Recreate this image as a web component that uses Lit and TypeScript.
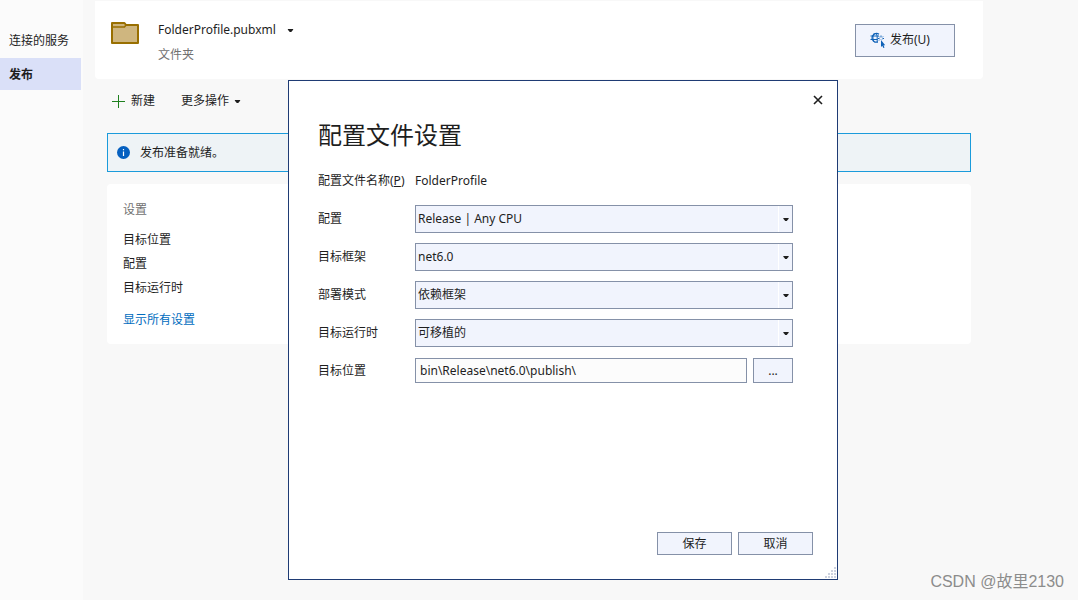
import { LitElement, html, css, svg } from "lit";
import { customElement, property, state } from "lit/decorators.js";

const caret = (cls: string) => html`<svg class=${cls} width="7" height="4" viewBox="0 0 7 4" aria-hidden="true">
  <path d="M0 0h7v1L4.500 4h-2L0 1z" fill="#1e1e1e" />
</svg>`;

@customElement("option-select")
class OptionSelect extends LitElement {
  @property() label = "";
  @property({ type: Array }) options: string[] = [];

  static styles = css`
    :host { display: contents; }
    .label { align-self: center; }
    .box { display: grid; grid-template-columns: 1fr 14px; height: 28px; box-sizing: border-box; border: 1px solid #8591a8; background: #f1f4fd; }
    .control { grid-area: 1 / 1 / 2 / 3; appearance: none; border: 0; margin: 0; padding: 0 16px 0 2px; background: none; font: inherit; line-height: 24px; color: inherit; min-width: 0; border-radius: 0; outline-offset: -2px; }
    .arrow { grid-area: 1 / 2; border-left: 1px solid #fff; display: flex; align-items: center; justify-content: center; pointer-events: none; }
    .caret { width: 6px; height: 3px; }
  `;

  render() {
    return html`
      <label class="label" for="control">${this.label}</label>
      <div class="box">
        <select class="control" id="control">
          ${this.options.map((o) => html`<option>${o}</option>`)}
        </select>
        <span class="arrow">${caret("caret")}</span>
      </div>
    `;
  }
}

@customElement("profile-dialog")
class ProfileDialog extends LitElement {
  @state() location = "bin\\Release\\net6.0\\publish\\";

  static styles = css`
    :host { display: flex; flex-direction: column; box-sizing: border-box; border: 1px solid #1f3b74; background: #fff; }
    .close { align-self: flex-end; display: flex; align-items: center; justify-content: center; width: 24px; height: 24px; margin: 7px 7px 0 0; padding: 0; border: 0; background: none; }
    .title { margin: 7px 29px 16px; font-size: 24px; line-height: 32px; font-weight: 400; }
    .form { display: grid; grid-template-columns: 87px 1fr; grid-auto-rows: 28px; gap: 10px; margin: 0 44px 0 29px; align-items: center; }
    .label { white-space: nowrap; }
    .path { display: flex; gap: 6px; height: 26px; }
    .input { flex: 1; min-width: 0; height: 25px; box-sizing: border-box; border: 1px solid #8591a8; padding: 0 4px; background: #fcfcfc; font: inherit; color: inherit; border-radius: 0; }
    .button { height: 23px; width: 75px; padding: 0; border: 1px solid #8591a8; background: #f1f4fd; font: inherit; color: inherit; border-radius: 0; }
    .browse { width: 40px; height: 25px; }
    .footer { display: flex; justify-content: flex-end; gap: 6px; margin-top: auto; padding: 0 24px 24px; }
    .grip { position: absolute; right: 1px; bottom: 1px; }
  `;

  render() {
    const dots = [];
    for (let r = 0; r < 4; r++)
      for (let c = 3 - r; c < 4; c++)
        dots.push(svg`<rect x=${c * 3} y=${r * 3} width="2" height="2" fill="#cdd2df" />`);
    return html`
      <button class="close" aria-label="关闭">
        <svg width="10" height="10" viewBox="0 0 10 10"><path d="M1 1l8 8M9 1l-8 8" stroke="#1e1e1e" stroke-width="1.6" /></svg>
      </button>
      <h1 class="title">配置文件设置</h1>
      <div class="form">
        <label class="label" for="name">配置文件名称(<u>P</u>)</label>
        <output id="name">FolderProfile</output>
        <option-select label="配置" .options=${["Release | Any CPU"]}></option-select>
        <option-select label="目标框架" .options=${["net6.0"]}></option-select>
        <option-select label="部署模式" .options=${["依赖框架"]}></option-select>
        <option-select label="目标运行时" .options=${["可移植的"]}></option-select>
        <label class="label" for="location">目标位置</label>
        <div class="path">
          <input class="input" id="location" .value=${this.location} />
          <button class="button browse">...</button>
        </div>
      </div>
      <div class="footer">
        <button class="button">保存</button>
        <button class="button">取消</button>
      </div>
      <svg class="grip" width="11" height="11" aria-hidden="true">${dots}</svg>
    `;
  }
}

@customElement("app-root")
class AppRoot extends LitElement {
  static styles = css`
    :host { display: grid; grid-template-columns: 83px 1fr; position: relative; min-height: 100vh; background: #f8f8f8; color: #1e1e1e; font: 12px/16px "Noto Sans", "Noto Sans CJK SC", sans-serif; }
    .nav { background: #fbfbfb; padding-top: 24px; }
    .nav-item { display: flex; align-items: center; height: 32px; box-sizing: border-box; margin: 0 2px 2px 0; padding: 2px 0 0 9px; color: inherit; text-decoration: none; white-space: nowrap; }
    .nav-item.active { background: #dae0f8; font-weight: 700; }
    .main { padding: 1px 95px 0 12px; }
    .header { display: flex; justify-content: space-between; align-items: center; height: 78px; box-sizing: border-box; padding: 0 28px 0 16px; background: #fff; border-radius: 0 0 4px 4px; }
    .profile { display: grid; grid-template-columns: 28px auto; column-gap: 19px; row-gap: 9px; padding-top: 4px; }
    .folder { grid-row: 1 / 3; }
    .plain { display: flex; align-items: center; gap: 11px; padding: 0; border: 0; background: none; font: inherit; color: inherit; }
    .kind { color: #717171; }
    .publish { display: flex; align-items: center; gap: 4px; width: 100px; height: 33px; padding: 0 14px; border: 1px solid #8591a8; background: #f1f4fd; font: inherit; color: inherit; white-space: nowrap; }
    .caret { height: 3px; padding-top: 1px; }
    .toolbar { display: flex; gap: 26px; padding: 14px 17px 0; height: 40px; align-items: flex-start; }
    .new { gap: 6px; }
    .more { gap: 5px; }
    .status { display: flex; align-items: center; gap: 10px; height: 39px; box-sizing: border-box; margin: 0 12px 12px; padding: 0 9px; border: 1px solid #1b9bdb; background: #eef3f6; }
    .settings { margin: 0 12px; padding: 16px; background: #fff; border-radius: 4px; }
    .heading { margin: 0 0 12px; font-size: 12px; line-height: 20px; font-weight: 400; color: #717171; }
    .list { list-style: none; margin: 0 0 16px; padding: 0; display: grid; gap: 8px; }
    .link { display: block; width: max-content; color: #006cbe; text-decoration: none; }
    .dialog { position: absolute; left: 288px; top: 80px; width: 550px; height: 500px; }
    .watermark { position: absolute; right: 14px; bottom: 8px; font: 16px/20px "Liberation Sans", "Noto Sans CJK SC", sans-serif; color: #8c8c8c; }
  `;

  render() {
    return html`
      <nav class="nav">
        <a class="nav-item" href="#services">连接的服务</a>
        <a class="nav-item active" href="#publish">发布</a>
      </nav>
      <main class="main">
        <header class="header">
          <div class="profile">
            <svg class="folder" width="28" height="22" viewBox="0 0 28 22" aria-hidden="true">
              <path d="M1 21V1h12.500l1.500 2h12v18z" fill="#cfb67f" stroke="#996f00" stroke-width="2" stroke-linejoin="round" />
              <path d="M1 5h12.500l1.500-2" fill="none" stroke="#996f00" stroke-width="1.500" />
            </svg>
            <button class="plain">FolderProfile.pubxml ${caret("caret")}</button>
            <span class="kind">文件夹</span>
          </div>
          <button class="publish">
            <svg width="16" height="16" viewBox="0 0 16 16" fill="none" stroke="#0f62b8" aria-hidden="true">
              <path d="M9 2.200A4.500 4.500 0 1 0 5 10.200H8" stroke-width="1.200" />
              <path d="M4.500 1C2.500 3.500 2.500 7.500 4.500 10.200M5.500 1C7 2.500 7.200 4 7.200 5V10M.5 4h8.500M.5 7.500h7" />
              <path d="M11 3.500v1.500M8 6.500h1.500M12.500 6.500h1.500M9 4.500l1 1M13 4.500l-1 1M9 8.500l1-1M12.500 8l-.5-.5" />
              <path d="M11 8v7l1.300-1.200 1 2.200 1.200-.6-1-2.100h1.700z" fill="#0f62b8" stroke="none" />
            </svg>
            发布(U)
          </button>
        </header>
        <div class="toolbar">
          <button class="plain new">
            <svg width="13" height="13" viewBox="0 0 13 13" aria-hidden="true"><path d="M6.500 0v13M0 6.500h13" stroke="#1f801f" /></svg>
            新建
          </button>
          <button class="plain more">更多操作 ${caret("caret")}</button>
        </div>
        <div class="status" role="status">
          <svg width="13" height="13" viewBox="0 0 13 13" aria-hidden="true">
            <circle cx="6.5" cy="6.5" r="6.5" fill="#0560c0" />
            <path d="M6.500 3v1.300M6.500 5.500V10" stroke="#fff" stroke-width="1.2" />
          </svg>
          发布准备就绪。
        </div>
        <section class="settings">
          <h2 class="heading">设置</h2>
          <ul class="list">
            <li>目标位置</li>
            <li>配置</li>
            <li>目标运行时</li>
          </ul>
          <a class="link" href="#all">显示所有设置</a>
        </section>
      </main>
      <profile-dialog class="dialog" role="dialog" aria-label="配置文件设置"></profile-dialog>
      <span class="watermark">CSDN @故里2130</span>
    `;
  }
}
